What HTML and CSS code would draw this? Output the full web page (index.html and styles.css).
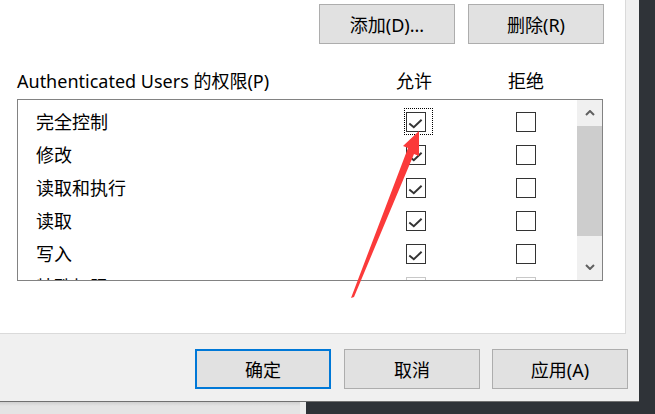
FILE: index.html
```html
<!DOCTYPE html>
<html lang="zh-CN">
<head>
<meta charset="utf-8">
<title>权限</title>
<link rel="stylesheet" href="styles.css">
</head>
<body>
<div class="screen">
  <div class="dialog">
    <div class="panel">
      <div class="top-actions">
        <button class="btn">添加(D)...</button>
        <button class="btn">删除(R)</button>
      </div>
      <div class="perm-head">
        <span class="perm-title">Authenticated Users 的权限(P)</span>
        <span class="col-h">允许</span>
        <span class="col-h">拒绝</span>
      </div>
      <div class="perm-list">
        <div class="rows">
          <div class="row">
            <span class="name">完全控制</span>
            <span class="cb focus"><svg width="18" height="18" viewBox="0 0 18 18"><polyline points="2.3,10.5 6.8,14.3 14.6,6.8" fill="none" stroke="#333" stroke-width="1.9"/></svg></span>
            <span class="cb"></span>
          </div>
          <div class="row">
            <span class="name">修改</span>
            <span class="cb"><svg width="18" height="18" viewBox="0 0 18 18"><polyline points="2.3,10.5 6.8,14.3 14.6,6.8" fill="none" stroke="#333" stroke-width="1.9"/></svg></span>
            <span class="cb"></span>
          </div>
          <div class="row">
            <span class="name">读取和执行</span>
            <span class="cb"><svg width="18" height="18" viewBox="0 0 18 18"><polyline points="2.3,10.5 6.8,14.3 14.6,6.8" fill="none" stroke="#333" stroke-width="1.9"/></svg></span>
            <span class="cb"></span>
          </div>
          <div class="row">
            <span class="name">读取</span>
            <span class="cb"><svg width="18" height="18" viewBox="0 0 18 18"><polyline points="2.3,10.5 6.8,14.3 14.6,6.8" fill="none" stroke="#333" stroke-width="1.9"/></svg></span>
            <span class="cb"></span>
          </div>
          <div class="row">
            <span class="name">写入</span>
            <span class="cb"><svg width="18" height="18" viewBox="0 0 18 18"><polyline points="2.3,10.5 6.8,14.3 14.6,6.8" fill="none" stroke="#333" stroke-width="1.9"/></svg></span>
            <span class="cb"></span>
          </div>
          <div class="row">
            <span class="name">特殊权限</span>
            <span class="cb disabled"></span>
            <span class="cb disabled"></span>
          </div>
        </div>
        <div class="scrollbar">
          <div class="sb-btn"><svg width="10" height="6" viewBox="0 0 10 6"><polyline points="1,5 5,1 9,5" fill="none" stroke="#606060" stroke-width="2"/></svg></div>
          <div class="sb-thumb"></div>
          <div class="sb-space"></div>
          <div class="sb-btn"><svg width="10" height="6" viewBox="0 0 10 6"><polyline points="1,1 5,5 9,1" fill="none" stroke="#606060" stroke-width="2"/></svg></div>
        </div>
      </div>
    </div>
    <div class="footer">
      <button class="btn primary">确定</button>
      <button class="btn">取消</button>
      <button class="btn">应用(A)</button>
    </div>
  </div>
  <div class="behind"></div>
  <svg class="arrow" width="655" height="414" viewBox="0 0 655 414">
    <polygon points="419,131 403,146 408,148 351,298 354,297 414,154 419,156" fill="#fb3a3a"/>
  </svg>
</div>
</body>
</html>
```

FILE: styles.css
```css
body {
  margin: 0;
}

.screen {
  position: relative;
  width: 655px;
  height: 414px;
  overflow: hidden;
  background: #2f3338;
  font-family: "Noto Sans", "Noto Sans CJK SC", sans-serif;
  font-size: 18px;
  color: #000;
}

.dialog {
  width: 639px;
  height: 402px;
  box-sizing: border-box;
  background: #f0f0f0;
  border-bottom: 1px solid #707070;
  display: flex;
  flex-direction: column;
}

.panel {
  width: 626px;
  height: 334px;
  box-sizing: border-box;
  background: #fff;
  border-right: 1px solid #dadada;
  border-bottom: 1px solid #dadada;
}

.btn {
  width: 136px;
  height: 40px;
  box-sizing: border-box;
  border: 1px solid #adadad;
  background: #e1e1e1;
  font-family: inherit;
  font-size: 18px;
  color: #000;
  padding: 0;
  display: flex;
  align-items: center;
  justify-content: center;
}

.btn.primary {
  border: 2px solid #0078d7;
  margin-right: 1px;
}

.top-actions {
  display: flex;
  justify-content: flex-end;
  gap: 13px;
  padding: 4px 21px 0 0;
}

.perm-head {
  display: grid;
  grid-template-columns: 379px 112px auto;
  padding-left: 17px;
  margin-top: 25px;
  height: 24px;
  line-height: 24px;
  white-space: nowrap;
}

.perm-list {
  margin: 6px 0 0 17px;
  width: 586px;
  height: 182px;
  box-sizing: border-box;
  border: 1px solid #828282;
  display: flex;
}

.rows {
  flex: 1;
  overflow: hidden;
  padding-top: 5px;
}

.row {
  display: grid;
  grid-template-columns: 370px 110px 20px;
  align-items: center;
  height: 33px;
  padding-left: 18px;
  line-height: 24px;
  white-space: nowrap;
}

.cb {
  position: relative;
  width: 20px;
  height: 20px;
  box-sizing: border-box;
  border: 1px solid #333;
  background: #fff;
}

.cb svg {
  display: block;
}

.cb.disabled {
  border-color: #c8c8c8;
}

.cb.focus::after {
  content: "";
  position: absolute;
  left: -3px;
  top: -5px;
  width: 27px;
  height: 25px;
  border: 1px dotted #000;
}

.scrollbar {
  width: 25px;
  background: #f0f0f0;
  display: flex;
  flex-direction: column;
}

.sb-btn {
  height: 26px;
  display: flex;
  align-items: center;
  justify-content: center;
}

.sb-thumb {
  height: 110px;
  background: #cdcdcd;
}

.sb-space {
  flex: 1;
}

.footer {
  display: flex;
  justify-content: flex-end;
  gap: 12px;
  padding: 15px 11px 0 0;
}

.behind {
  width: 300px;
  height: 12px;
  background: linear-gradient(#cfcfcf, #e4e4e4 4px);
  border-right: 6px solid #ededed;
}

.arrow {
  position: absolute;
  left: 0;
  top: 0;
  pointer-events: none;
}
```
